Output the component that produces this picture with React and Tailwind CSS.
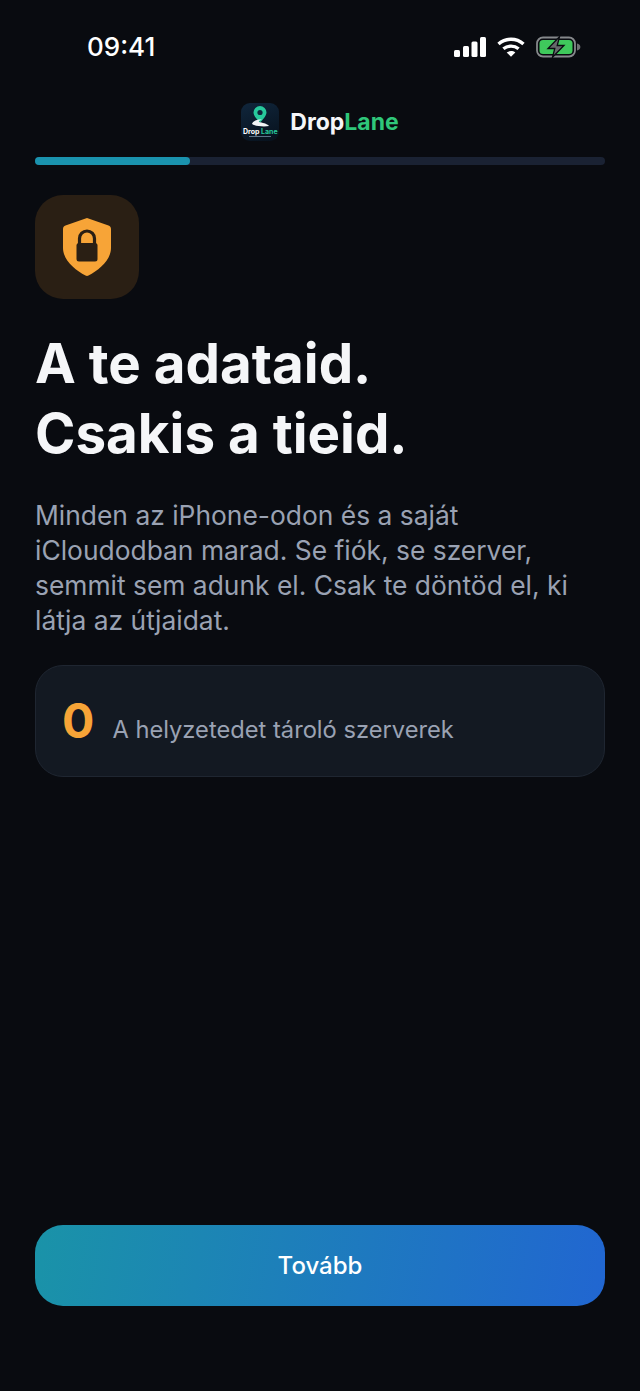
import React from 'react'

const SignalIcon = () => (
  <svg width="32" height="20" viewBox="0 0 32 20" fill="#fff">
    <rect x="0" y="13" width="6" height="7" rx="1.500" />
    <rect x="9" y="9" width="6" height="11" rx="1.500" />
    <rect x="17.500" y="4.500" width="6" height="15.500" rx="1.500" />
    <rect x="26" y="0" width="6" height="20" rx="1.500" />
  </svg>
)

const WifiIcon = () => (
  <svg width="28" height="20" viewBox="0 0 28 20" fill="none" stroke="#fff" strokeWidth="3.400">
    <path d="M1.500 7C8.600 .6 19.400 .6 26.500 7" />
    <path d="M6.400 11.800C10.800 8.200 17.200 8.200 21.600 11.800" />
    <path d="M14 19.800 9.700 15.500C12.200 13.600 15.800 13.600 18.300 15.500Z" fill="#fff" stroke="none" />
  </svg>
)

const BatteryIcon = () => (
  <svg width="45" height="22" viewBox="0 0 45 22">
    <rect x="1" y="1.500" width="38" height="19" rx="6" fill="none" stroke="#85888b" strokeWidth="1.800" />
    <rect x="3.500" y="4" width="33" height="14" rx="3.500" fill="#3fc95c" />
    <path d="M41 7.500c2 .4 3.400 1.800 3.400 3.500s-1.400 3.100-3.400 3.500z" fill="#6f7174" />
    <path d="M23.500 .8 12 12.500h6.800l-2.300 8.800L28 9.500h-6.800z" fill="#66696b" stroke="#0a0c11" strokeWidth="1.300" />
  </svg>
)

// small app mark next to the product name
const LogoMark = () => (
  <div className="relative w-[38px] h-[38px] rounded-[9px] bg-[linear-gradient(160deg,#10263c,#07111c)] overflow-hidden">
    <svg className="absolute left-0 top-0" width="38" height="38" viewBox="0 0 38 38">
      <path d="M19 3a6.500 6.500 0 0 0-6.500 6.500c0 4 6.500 10 6.500 10s6.500-6 6.500-10A6.500 6.500 0 0 0 19 3z" fill="#27c99c" />
      <circle cx="19" cy="9.500" r="2.600" fill="#10263c" />
      <path d="M11 21c1-3.500 6-5 10-4.500-2 .8-3.500 1.600-3 2.600 3 .8 8 1.400 10 4-5 .6-13 .4-17-2.100z" fill="#f2f5f7" />
    </svg>
    <span className="absolute left-0 right-0 top-[25px] text-center text-[7px] leading-[8px] font-bold text-white whitespace-nowrap">
      Drop <span className="text-[#27c99c]">Lane</span>
    </span>
    <div className="absolute left-[8px] right-[8px] top-[33px] h-px bg-[#5c7388]" />
  </div>
)

const ShieldLockIcon = () => (
  <svg width="48" height="58" viewBox="0 0 48 58">
    <path
      d="M24 0 45.500 7.500C47 8 48 9.400 48 11V30C48 42 36 52 25.500 57.500C24.500 58 23.500 58 22.500 57.500C12 52 0 42 0 30V11C0 9.400 1 8 2.500 7.500Z"
      fill="#f7a437"
    />
    <path d="M16.500 26V20.500a7.500 7.500 0 0 1 15 0V26" fill="none" stroke="#2a1f14" strokeWidth="3.200" />
    <rect x="13.500" y="25" width="21" height="18.500" rx="2.500" fill="#2a1f14" />
  </svg>
)

export default function App() {
  return (
    <div className="w-[640px] h-[1391px] bg-[#090b10] flex flex-col font-['Inter',sans-serif] overflow-hidden">
      <div className="h-[94px] flex justify-between items-start pt-[32px] pl-[87px] pr-[59px]">
        <span className="text-[26px] leading-[30px] font-medium text-white">09:41</span>
        <div className="flex items-center gap-[11px] h-[30px]">
          <SignalIcon />
          <WifiIcon />
          <BatteryIcon />
        </div>
      </div>

      <div className="flex items-center justify-center gap-[11px] h-[54px] pt-[2px]">
        <LogoMark />
        <span className="text-[23px] leading-[28px] font-bold text-[#f5f6f8]">
          Drop<span className="text-[#2fc77a]">Lane</span>
        </span>
      </div>

      <div className="flex-1 flex flex-col px-[35px] pt-[9px]">
        <div className="h-2 rounded-full bg-[#1a2233]">
          <div className="h-2 w-[155px] rounded-full bg-[#1a93ae]" />
        </div>

        <div className="mt-[30px] w-[104px] h-[104px] rounded-[28px] bg-[#2a1f14] flex items-center justify-center">
          <ShieldLockIcon />
        </div>

        <h1 className="mt-[29px] text-[54.700px] leading-[70px] font-bold text-[#f5f6f8]">
          A te adataid.
          <br />
          Csakis a tieid.
        </h1>

        <p className="mt-[30px] text-[26.400px] leading-[35px] text-[#9aa2b3]">
          Minden az iPhone-odon és a saját iCloudodban marad. Se fiók, se szerver, semmit sem adunk el. Csak te döntöd el, ki látja az útjaidat.
        </p>

        <div className="mt-[27px] h-[112px] rounded-[28px] bg-[#131922] border border-[#1f2631] flex items-center gap-[18px] px-[26px]">
          <span className="text-[48px] leading-[56px] font-bold text-[#f7a437]">0</span>
          <span className="text-[23.700px] leading-[30px] text-[#9aa2b3] pt-[17px]">A helyzetedet tároló szerverek</span>
        </div>

        <div className="flex-1" />

        <button className="mb-[85px] h-[81px] rounded-[28px] bg-[linear-gradient(100deg,#1a93a8,#2166d1)] text-[24px] font-medium text-white">
          Tovább
        </button>
      </div>
    </div>
  )
}
